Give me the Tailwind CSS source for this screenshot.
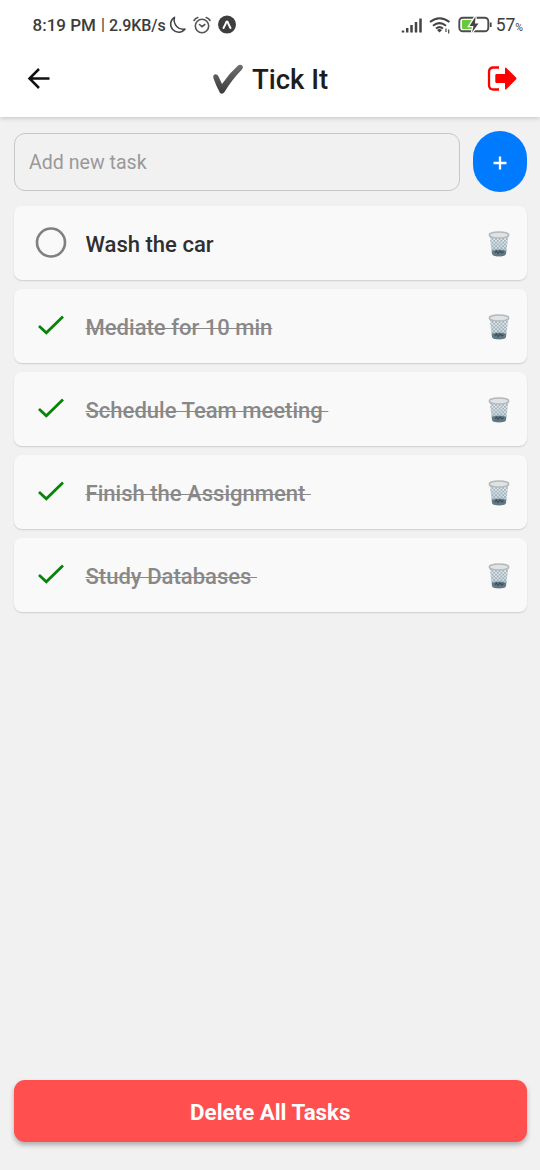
<!DOCTYPE html>
<html lang="en">
<head>
<meta charset="utf-8">
<title>Tick It</title>
<script src="https://cdn.jsdelivr.net/npm/@tailwindcss/browser@4"></script>
</head>
<body class="w-[540px] h-[1170px] overflow-hidden flex flex-col bg-[#f1f1f1] font-['Roboto',sans-serif]">
<svg width="0" height="0" class="absolute">
  <defs>
    <linearGradient id="bin" x1="0" y1="0" x2="0" y2="1"><stop offset="0" stop-color="#eceff0"/><stop offset=".6" stop-color="#d3dde2"/><stop offset="1" stop-color="#8299a5"/></linearGradient>
    <pattern id="mesh" width="3.6" height="3.6" patternUnits="userSpaceOnUse"><path d="M0 0L3.6 3.6M3.6 0L0 3.6" stroke="#8fa5b2" stroke-width=".7"/></pattern>
    <symbol id="trash" viewBox="0 0 24 28">
      <path d="M2.500 5L5 23.500Q5.300 26.300 12 26.300T19 23.500L21.500 5Z" fill="url(#bin)"/>
      <path d="M2.500 5L5 23.500Q5.300 26.300 12 26.300T19 23.500L21.500 5Z" fill="url(#mesh)"/>
      <path d="M4.800 20.700Q12 19 19.200 20.700L19 23.700Q18.500 26.300 12 26.300T5 23.700Z" fill="#58707c" opacity=".85"/>
      <path d="M8 23L9.500 21L11 23.500L13 21L15 23L16.500 21.500" fill="none" stroke="#3a4e59" stroke-width="1.200"/>
      <ellipse cx="12" cy="5" rx="9.700" ry="3" fill="#dfe3e5" stroke="#b4b8ba" stroke-width="1.500"/>
    </symbol>
    <symbol id="check" viewBox="0 0 28 22"><path d="M2 12L9.300 18.800L26 2.500" fill="none" stroke="#078307" stroke-width="2.700"/></symbol>
  </defs>
</svg>

<header class="relative h-[117px] shrink-0 bg-white shadow-[0_1px_5px_rgba(0,0,0,0.2)]">
  <div class="h-[50px] flex items-center justify-between pl-[32.500px] pr-[17px] text-[#3c3c3c]">
    <div class="flex items-center leading-5 font-medium whitespace-pre"><span class="w-[68.500px] text-[17px]">8:19 PM</span><span class="w-[8px] text-[16px] font-normal">|</span><span class="w-[60px] text-[16px] pt-px tracking-[-0.1px]">2.9KB/s</span>
      <svg class="w-[18px] h-[20px] shrink-0" viewBox="0 0 18 20" fill="none" stroke="#444" stroke-width="1.500" stroke-linejoin="round"><path d="M5.500 2.300A8 8 0 1 0 16 14C9.700 15.500 3.700 9.500 5.500 2.300Z"/></svg>
      <svg class="w-[20px] h-[20px] shrink-0 ml-[5px]" viewBox="0 0 20 20" fill="none" stroke="#555" stroke-width="1.600" stroke-linecap="round"><circle cx="10" cy="11" r="6.700"/><path d="M2 5.500Q3.300 3.200 5.800 2.500M18 5.500Q16.700 3.200 14.200 2.500M7.500 9.500L10 11.700L12.800 9.500"/></svg>
      <svg class="w-[20px] h-[20px] shrink-0 ml-[5px]" viewBox="0 0 20 20"><circle cx="10" cy="9.600" r="9" fill="#3e3e3e"/><path d="M6.500 13Q8.500 9.500 9.300 7Q10 6 10.700 7Q11.500 9.500 13.500 13" fill="none" stroke="#fff" stroke-width="2" stroke-linecap="round"/></svg>
    </div>
    <div class="flex items-center">
      <svg class="w-[22px] h-[18px]" viewBox="0 0 22 18" fill="none" stroke="#444" stroke-width="2.500"><path d="M2 16.500V14.500M6.200 16.500V12M10.500 16.500V9M15 16.500V6M19.500 16.500V2.500"/></svg>
      <svg class="w-[22px] h-[18px] ml-[6px]" viewBox="0 0 22 18" fill="none" stroke="#444" stroke-width="2"><path d="M1 6Q10.500 -1.500 20.500 6M4 9.700Q10.500 4.500 17 9.700M7 12.500Q10.500 9.700 14 12.500"/><path d="M8 14Q10.500 12 13 14L10.500 16.500Z" fill="#444" stroke="none"/><path d="M17 12.500V16M19.700 13.500V17.500" stroke-width="1.200"/></svg>
      <svg class="w-[36px] h-[20px] ml-[7px]" viewBox="0 0 36 20"><rect x="1.300" y="2.700" width="29" height="13.600" rx="3.500" fill="#fff" stroke="#4c4c4c" stroke-width="1.900"/><path d="M5 5H14L12 10.500H15V14H5Q4 14 4 13V6Q4 5 5 5Z" fill="#66ca3b"/><path d="M17.500 1.500L11.500 11H15.500L14 17.500L20.500 8.500H17Z" fill="#444" stroke="#fff" stroke-width="2.500" paint-order="stroke"/><path d="M32.700 7.500V12" stroke="#444" stroke-width="1.800"/></svg>
      <span class="text-[17.500px] leading-5 ml-[1.500px]">57</span><span class="text-[10.500px] pt-[5px]">%</span>
    </div>
  </div>
  <div class="h-[58px] flex items-center justify-between pl-[27px] pr-[22px]">
    <svg class="w-[24px] h-[24px]" viewBox="0 0 24 24" fill="none" stroke="#111" stroke-width="2.500"><path d="M22.500 11.500H3M12 2L2.500 11.500L12 21"/></svg>
    <h1 class="flex items-center text-[27.500px] leading-8 font-medium text-[#1d1d1d] ml-[2px] pt-[2px]"><svg class="w-[32px] h-[32px] mr-[8px]" viewBox="0 0 32 32"><defs><linearGradient id="tick" x1="0" y1="0" x2="0" y2="1"><stop offset="0" stop-color="#707070"/><stop offset="1" stop-color="#3b3b3b"/></linearGradient></defs><path d="M1.500 11.500Q3 9.500 5.500 11Q6.500 12 7 13.500L10 20Q17 9.500 26 1.500Q28.500 0 30.500 1.700Q31.700 3.500 30 5.500Q20 15.500 12.500 28Q10.500 31 8 29Q4 21.500 1.500 14.500Q1 12.500 1.500 11.500Z" fill="url(#tick)"/></svg>Tick It</h1>
    <svg class="w-[31px] h-[26px]" viewBox="0 0 31 26"><path d="M12 1.500H6.500Q2 1.500 2 6V19Q2 23.500 6.500 23.500H12" fill="none" stroke="#f00" stroke-width="2.300"/><path d="M9.500 8H18V2.500Q18 .7 19.300 1.900L29 11.500Q29.800 12.500 29 13.500L19.300 23.200Q18 24.300 18 22.500V17H9.500Q8.300 17 8.300 15.800V9.200Q8.300 8 9.500 8Z" fill="#f00"/></svg>
  </div>
</header>

<main class="flex-1 flex flex-col pl-[14px] pr-[13.500px] pt-[14px] pb-[28px]">
  <div class="flex items-center gap-[13.500px] h-[61px] mb-[14px]">
    <div class="flex-1 h-[58px] rounded-[11px] border border-[#c7c7c7] flex items-center pl-[14px] pt-[3px] text-[19.600px] text-[#999]">Add new task</div>
    <button class="w-[53.500px] h-[61px] rounded-[27px] bg-[#007bff] flex items-center justify-center"><svg class="w-[14px] h-[14px] mt-[2px]" viewBox="0 0 14 14"><path d="M7 .5V13.500M.5 7H13.500" stroke="#fff" stroke-width="2.300"/></svg></button>
  </div>
  <ul class="flex flex-col gap-[9px] text-[22.050px] font-medium text-[#888]">
    <li class="h-[74px] rounded-[8px] bg-[#f9f9f9] shadow-[0_1px_1.500px_rgba(0,0,0,0.15)] flex items-center pl-[21px] pr-[15.500px] text-[#2f2f2f]">
      <svg class="w-[32px] h-[32px] mr-[18.500px]" viewBox="0 0 32 32"><circle cx="16" cy="15.500" r="14" fill="none" stroke="#808080" stroke-width="2.600"/></svg><span class="flex-1 pt-[3px] whitespace-pre">Wash the car</span><svg class="w-[24px] h-[28px] mt-[2px]"><use href="#trash"/></svg>
    </li>
    <li class="h-[74px] rounded-[8px] bg-[#f9f9f9] shadow-[0_1px_1.500px_rgba(0,0,0,0.15)] flex items-center pl-[23px] pr-[15.500px]">
      <svg class="w-[28px] h-[22px] mr-[20.500px] mb-[3px]"><use href="#check"/></svg><span class="flex-1 pt-[3px]"><span class="whitespace-pre line-through decoration-1">Mediate for 10 min</span></span><svg class="w-[24px] h-[28px] mt-[2px]"><use href="#trash"/></svg>
    </li>
    <li class="h-[74px] rounded-[8px] bg-[#f9f9f9] shadow-[0_1px_1.500px_rgba(0,0,0,0.15)] flex items-center pl-[23px] pr-[15.500px]">
      <svg class="w-[28px] h-[22px] mr-[20.500px] mb-[3px]"><use href="#check"/></svg><span class="flex-1 pt-[3px]"><span class="whitespace-pre line-through decoration-1">Schedule Team meeting </span></span><svg class="w-[24px] h-[28px] mt-[2px]"><use href="#trash"/></svg>
    </li>
    <li class="h-[74px] rounded-[8px] bg-[#f9f9f9] shadow-[0_1px_1.500px_rgba(0,0,0,0.15)] flex items-center pl-[23px] pr-[15.500px]">
      <svg class="w-[28px] h-[22px] mr-[20.500px] mb-[3px]"><use href="#check"/></svg><span class="flex-1 pt-[3px]"><span class="whitespace-pre line-through decoration-1">Finish the Assignment </span></span><svg class="w-[24px] h-[28px] mt-[2px]"><use href="#trash"/></svg>
    </li>
    <li class="h-[74px] rounded-[8px] bg-[#f9f9f9] shadow-[0_1px_1.500px_rgba(0,0,0,0.15)] flex items-center pl-[23px] pr-[15.500px]">
      <svg class="w-[28px] h-[22px] mr-[20.500px] mb-[3px]"><use href="#check"/></svg><span class="flex-1 pt-[3px]"><span class="whitespace-pre line-through decoration-1">Study Databases </span></span><svg class="w-[24px] h-[28px] mt-[2px]"><use href="#trash"/></svg>
    </li>
  </ul>
  <button class="mt-auto h-[62px] shrink-0 rounded-[11px] bg-[#ff4f4f] text-white text-[22.300px] font-bold flex items-center justify-center pt-[3px] shadow-[0_3px_5px_rgba(0,0,0,0.28)]">Delete All Tasks</button>
</main>
</body>
</html>
